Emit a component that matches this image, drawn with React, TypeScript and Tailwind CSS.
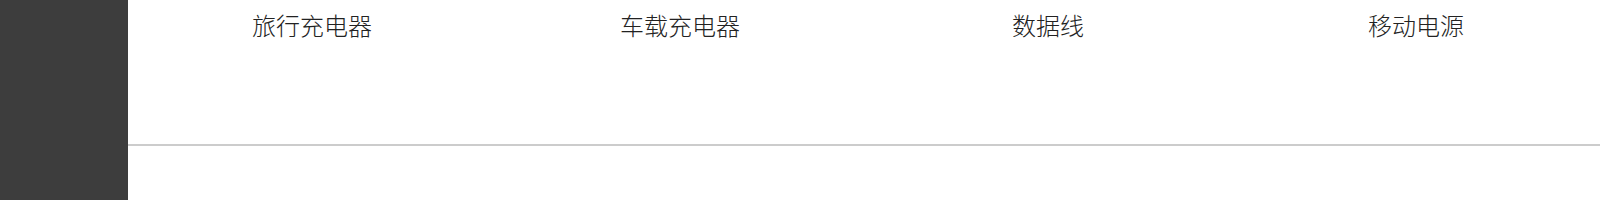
export default function App() {
  const items = ["旅行充电器", "车载充电器", "数据线", "移动电源"];
  return (
    <div className="flex h-[200px] w-[1600px] bg-white" style={{ fontFamily: '"Noto Sans CJK SC", "Noto Sans", sans-serif' }}>
      <div className="w-[128px] shrink-0 bg-[#3d3d3d]" />
      <div className="flex flex-1 flex-col">
        <div className="grid h-[146px] grid-cols-4 border-b-2 border-[#cccccc]">
          {items.map((t) => (
            <div key={t} className="pt-[7px] text-center text-[24px] font-light leading-[36px] text-[#222222]">
              {t}
            </div>
          ))}
        </div>
      </div>
    </div>
  );
}
